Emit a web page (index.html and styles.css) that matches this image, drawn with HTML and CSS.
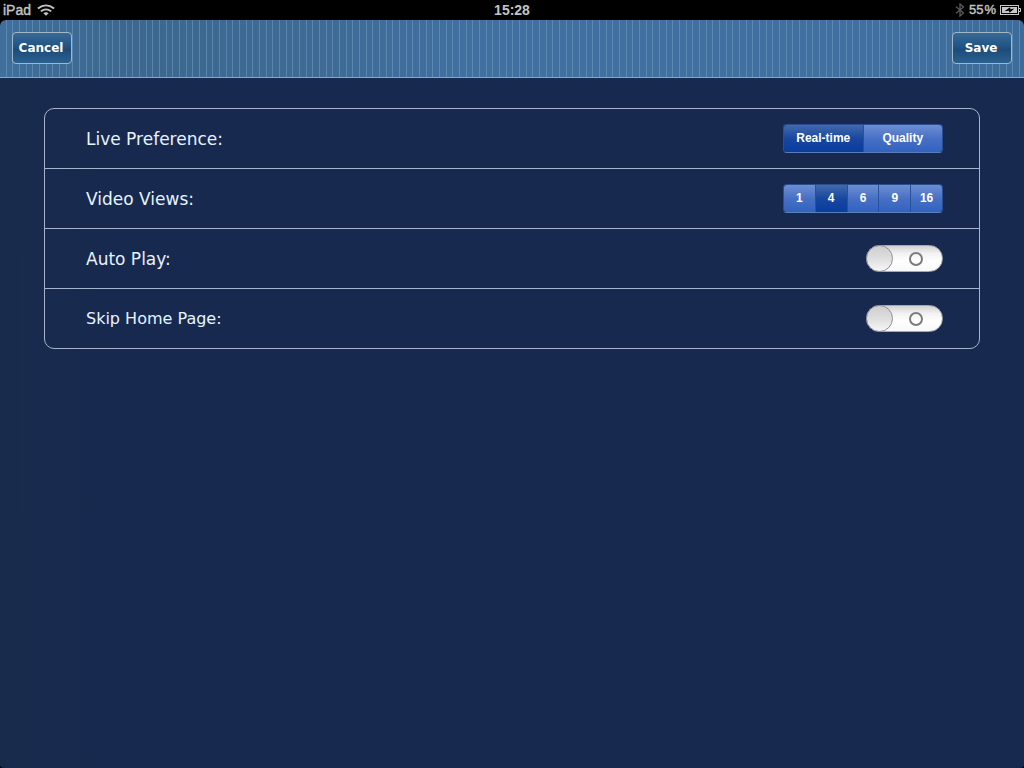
FILE: index.html
```html
<!DOCTYPE html>
<html lang="en">
<head>
<meta charset="utf-8">
<meta name="viewport" content="width=device-width, initial-scale=1">
<title>Settings</title>
<link rel="stylesheet" href="styles.css">
</head>
<body>
<div class="status">
  <div class="status-left">
    <span>iPad</span>
    <svg width="18" height="12" viewBox="0 0 16 12" preserveAspectRatio="none" fill="none" stroke="#c4c4c4" stroke-width="1.8" aria-hidden="true"><path d="M.8 4.5Q8-1.8 15.2 4.5M3.4 7.4Q8 3.4 12.6 7.4"/><path d="M5.6 9.2Q8 7.4 10.4 9.2L8 11.8Z" fill="#c4c4c4" stroke="none"/></svg>
  </div>
  <time class="clock">15:28</time>
  <div class="status-right">
    <svg class="bluetooth" width="10" height="14" viewBox="0 0 10 14" fill="none" stroke="#5b5b5b" stroke-width="1.3" aria-hidden="true"><path d="M1 3.8L8.5 10 5 13V1L8.5 4 1 10.2"/></svg>
    <span class="percent">55<span>%</span></span>
    <svg width="21" height="12" viewBox="0 0 21 12" aria-hidden="true"><rect x=".5" y="1.5" width="18" height="9" fill="none" stroke="#c8c8c8"/><rect x="2" y="3" width="15" height="6" fill="#c8c8c8"/><path d="M19 4.5h1.5v3H19" fill="none" stroke="#c8c8c8"/><path d="M4.5 7.2L10 3.2 10.5 5.2 14.5 4.6 9.5 8.8 9 6.8Z" fill="#000"/></svg>
  </div>
</div>
<header class="toolbar">
  <button class="bar-button" type="button">Cancel</button>
  <button class="bar-button" type="button">Save</button>
</header>
<main class="content">
  <form class="settings">
    <div class="row" role="radiogroup" aria-labelledby="live">
      <span id="live">Live Preference:</span>
      <div class="segments">
        <label class="segment"><input type="radio" name="live" checked><span>Real-time</span></label>
        <label class="segment"><input type="radio" name="live"><span>Quality</span></label>
      </div>
    </div>
    <div class="row" role="radiogroup" aria-labelledby="views">
      <span id="views">Video Views:</span>
      <div class="segments">
        <label class="segment"><input type="radio" name="views"><span>1</span></label>
        <label class="segment"><input type="radio" name="views" checked><span>4</span></label>
        <label class="segment"><input type="radio" name="views"><span>6</span></label>
        <label class="segment"><input type="radio" name="views"><span>9</span></label>
        <label class="segment"><input type="radio" name="views"><span>16</span></label>
      </div>
    </div>
    <div class="row">
      <label for="autoplay">Auto Play:</label>
      <input class="switch" id="autoplay" type="checkbox" role="switch">
    </div>
    <div class="row">
      <label class="long-label" for="skip">Skip Home Page:</label>
      <input class="switch" id="skip" type="checkbox" role="switch">
    </div>
  </form>
</main>
</body>
</html>
```
FILE: styles.css
```css
* { box-sizing: border-box; }

body {
  margin: 0;
  min-height: 100vh;
  background: #000;
  font-family: Verdana, "DejaVu Sans", sans-serif;
  display: flex;
  flex-direction: column;
}

.status {
  display: grid;
  grid-template-columns: 1fr auto 1fr;
  align-items: center;
  height: 20px;
  padding: 0 3px;
  color: #c4c4c4;
  font: 14px/18px "Liberation Sans", Arial, sans-serif;
}

.status-left,
.status-right {
  display: flex;
  align-items: center;
  gap: 6px;
  -webkit-text-stroke: 0.4px;
}

.status-right {
  justify-content: flex-end;
  gap: 4px;
  font-size: 13px;
}

.percent {
  display: flex;
  gap: 1px;
}

.clock { font-weight: bold; }

.toolbar {
  display: flex;
  align-items: center;
  justify-content: space-between;
  height: 58px;
  padding: 0 12px 1px;
  border-bottom: 1px solid #6fb0dc;
  border-radius: 6px 6px 0 0;
  background:
    repeating-linear-gradient(90deg,
      transparent 0 6px, #83b0d466 6px 7px,
      transparent 7px 12px, #83b0d466 12px 13px,
      transparent 13px 19px, #83b0d466 19px 20px),
    linear-gradient(90deg, #406f9c, #3d678e 12%, #3e6a94 30%, #416f9f 45%, #416f9f 85%, #3d6c9a);
}

.bar-button {
  width: 60px;
  height: 32px;
  padding: 0 2px 0 0;
  border: 1px solid #a3b8c6;
  border-radius: 4px;
  background: linear-gradient(#386a98, #205484 45%, #1c4c7a 55%, #2c608e);
  color: #fff;
  font: bold 12px/16px Verdana, "DejaVu Sans", sans-serif;
}

.content {
  flex: 1;
  padding: 30px 44px;
  border-radius: 0 0 4px 4px;
  background: linear-gradient(90deg, #182b4c, #18294f 10%);
}

.settings {
  border: 1px solid #a6b4cf;
  border-radius: 10px;
}

.row {
  display: flex;
  align-items: center;
  justify-content: space-between;
  height: 60px;
  padding: 0 36px 0 41px;
  color: #e6f4ff;
  font-size: 17px;
  line-height: 24px;
}

.row:first-child { height: 59px; }

.row + .row { border-top: 1px solid #a6b4cf; }

.long-label { font-size: 16px; }

.segments {
  display: flex;
  width: 160px;
  height: 29px;
  border: 1px solid #2a4d94;
  border-bottom-color: #5d7db8;
  border-radius: 4px;
  overflow: hidden;
}

.segment {
  position: relative;
  flex: 1;
  color: #fff;
  font: bold 12px/27px "Liberation Sans", Arial, sans-serif;
  text-align: center;
}

.segment + .segment { border-left: 1px solid #2a4f9c; }

.segment input {
  position: absolute;
  opacity: 0;
}

.segment span {
  display: block;
  background: linear-gradient(#6c8fd2, #4870c4 50%, #3163c0);
}

.segment input:checked + span {
  background: linear-gradient(#4369ad, #18479f 50%, #0a3ca0);
}

.switch {
  appearance: none;
  display: flex;
  align-items: center;
  width: 77px;
  height: 27px;
  margin: 0;
  border: 1px solid #a4a9b0;
  border-radius: 14px;
  background: linear-gradient(#d2d2d2, #f2f2f2 30%, #fff 60%, #f8f8f8);
}

.switch::before {
  content: "";
  box-sizing: border-box;
  width: 27px;
  height: 27px;
  margin-left: -1px;
  border: 1px solid #8e8e92;
  border-radius: 50%;
  background: linear-gradient(#cecece, #dedede 50%, #f6f6f6);
}

.switch::after {
  content: "";
  box-sizing: border-box;
  width: 14px;
  height: 14px;
  margin-left: 16px;
  border: 2px solid #7c7c7c;
  border-radius: 50%;
}
```
